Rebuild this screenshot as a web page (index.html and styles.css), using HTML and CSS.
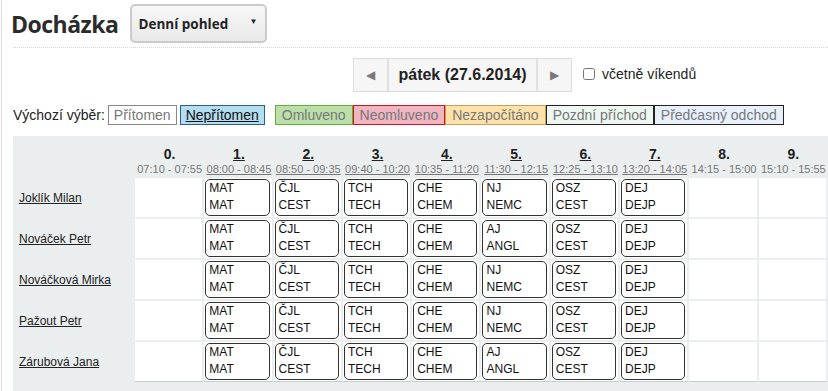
FILE: index.html
```html
<!DOCTYPE html>
<html lang="cs">
<head>
    <meta charset="UTF-8">
    <title>Docházka</title>
    <link rel="stylesheet" href="styles.css">
</head>
<body>
<div class="page">
    <div class="top">
        <h1>Docházka</h1>
        <div class="select-wrap">
            <select id="view">
                <option>Denní pohled</option>
                <option>Týdenní pohled</option>
            </select>
        </div>
    </div>

    <div class="datebar">
        <div class="datenav">
            <a class="nav-btn" href="#">&#9664;</a>
            <span class="nav-date">pátek (27.6.2014)</span>
            <a class="nav-btn" href="#">&#9654;</a>
        </div>
        <label class="weekend"><input type="checkbox"> včetně víkendů</label>
    </div>

    <div class="legend">
        <span class="legend-label">Výchozí výběr:</span>
        <span class="tag tag-present">Přítomen</span>
        <span class="tag tag-absent"><a href="#">Nepřítomen</a></span>
        <span class="group">
            <span class="tag tag-excused">Omluveno</span><span class="tag tag-unexcused">Neomluveno</span><span class="tag tag-uncounted">Nezapočítáno</span><span class="tag tag-late">Pozdní příchod</span><span class="tag tag-early">Předčasný odchod</span>
        </span>
    </div>

    <div class="board">
        <table class="grid">
            <thead>
                <tr>
                    <th class="name-col"></th>
                    <th><span class="num">0.</span><span class="time">07:10 - 07:55</span></th>
                    <th><a href="#" class="num">1.</a><a href="#" class="time">08:00 - 08:45</a></th>
                    <th><a href="#" class="num">2.</a><a href="#" class="time">08:50 - 09:35</a></th>
                    <th><a href="#" class="num">3.</a><a href="#" class="time">09:40 - 10:20</a></th>
                    <th><a href="#" class="num">4.</a><a href="#" class="time">10:35 - 11:20</a></th>
                    <th><a href="#" class="num">5.</a><a href="#" class="time">11:30 - 12:15</a></th>
                    <th><a href="#" class="num">6.</a><a href="#" class="time">12:25 - 13:10</a></th>
                    <th><a href="#" class="num">7.</a><a href="#" class="time">13:20 - 14:05</a></th>
                    <th><span class="num">8.</span><span class="time">14:15 - 15:00</span></th>
                    <th><span class="num">9.</span><span class="time">15:10 - 15:55</span></th>
                </tr>
            </thead>
            <tbody>
                <tr>
                    <td class="name"><a href="#">Joklík Milan</a></td>
                    <td></td>
                    <td><div class="lesson">MAT<br>MAT</div></td>
                    <td><div class="lesson">ČJL<br>CEST</div></td>
                    <td><div class="lesson">TCH<br>TECH</div></td>
                    <td><div class="lesson">CHE<br>CHEM</div></td>
                    <td><div class="lesson">NJ<br>NEMC</div></td>
                    <td><div class="lesson">OSZ<br>CEST</div></td>
                    <td><div class="lesson">DEJ<br>DEJP</div></td>
                    <td></td>
                    <td></td>
                </tr>
                <tr>
                    <td class="name"><a href="#">Nováček Petr</a></td>
                    <td></td>
                    <td><div class="lesson">MAT<br>MAT</div></td>
                    <td><div class="lesson">ČJL<br>CEST</div></td>
                    <td><div class="lesson">TCH<br>TECH</div></td>
                    <td><div class="lesson">CHE<br>CHEM</div></td>
                    <td><div class="lesson">AJ<br>ANGL</div></td>
                    <td><div class="lesson">OSZ<br>CEST</div></td>
                    <td><div class="lesson">DEJ<br>DEJP</div></td>
                    <td></td>
                    <td></td>
                </tr>
                <tr>
                    <td class="name"><a href="#">Nováčková Mirka</a></td>
                    <td></td>
                    <td><div class="lesson">MAT<br>MAT</div></td>
                    <td><div class="lesson">ČJL<br>CEST</div></td>
                    <td><div class="lesson">TCH<br>TECH</div></td>
                    <td><div class="lesson">CHE<br>CHEM</div></td>
                    <td><div class="lesson">NJ<br>NEMC</div></td>
                    <td><div class="lesson">OSZ<br>CEST</div></td>
                    <td><div class="lesson">DEJ<br>DEJP</div></td>
                    <td></td>
                    <td></td>
                </tr>
                <tr>
                    <td class="name"><a href="#">Pažout Petr</a></td>
                    <td></td>
                    <td><div class="lesson">MAT<br>MAT</div></td>
                    <td><div class="lesson">ČJL<br>CEST</div></td>
                    <td><div class="lesson">TCH<br>TECH</div></td>
                    <td><div class="lesson">CHE<br>CHEM</div></td>
                    <td><div class="lesson">NJ<br>NEMC</div></td>
                    <td><div class="lesson">OSZ<br>CEST</div></td>
                    <td><div class="lesson">DEJ<br>DEJP</div></td>
                    <td></td>
                    <td></td>
                </tr>
                <tr>
                    <td class="name"><a href="#">Zárubová Jana</a></td>
                    <td></td>
                    <td><div class="lesson">MAT<br>MAT</div></td>
                    <td><div class="lesson">ČJL<br>CEST</div></td>
                    <td><div class="lesson">TCH<br>TECH</div></td>
                    <td><div class="lesson">CHE<br>CHEM</div></td>
                    <td><div class="lesson">AJ<br>ANGL</div></td>
                    <td><div class="lesson">OSZ<br>CEST</div></td>
                    <td><div class="lesson">DEJ<br>DEJP</div></td>
                    <td></td>
                    <td></td>
                </tr>
            </tbody>
        </table>
    </div>
</div>
</body>
</html>
```

FILE: styles.css
```css
body {
    margin: 0;
    font-family: "Liberation Sans", Arial, sans-serif;
    color: #222;
    background: #fff;
    overflow: hidden;
}
a {
    color: #222;
}
.page {
    margin-left: 1px;
    border-left: 1px solid #dedede;
    padding-left: 11px;
    min-height: 391px;
}
.top {
    display: flex;
    align-items: center;
    height: 47px;
    border-bottom: 1px dotted #d4d4d4;
}
h1 {
    margin: 0 0 0 -2px;
    font-family: "Open Sans", sans-serif;
    font-size: 23px;
    font-weight: 700;
    color: #2b2b2b;
    letter-spacing: -0.5px;
}
.select-wrap {
    position: relative;
    margin-left: 12px;
}
.select-wrap::after {
    content: "\25BC";
    position: absolute;
    right: 10px;
    top: 13px;
    font-size: 8px;
    color: #222;
    pointer-events: none;
}
select {
    appearance: none;
    -webkit-appearance: none;
    width: 137px;
    height: 39px;
    padding: 0 0 0 6px;
    border: 2px solid #cbcbcb;
    border-radius: 5px;
    background: linear-gradient(#f7f7f7, #e9e9e9);
    font-family: "Open Sans", sans-serif;
    font-size: 13.5px;
    font-weight: 700;
    color: #222;
}
.datebar {
    display: flex;
    align-items: center;
    margin: 10px 0 0 340px;
}
.datenav {
    display: flex;
    height: 32px;
    border: 1px solid #dcdcdc;
    background: #f6f6f6;
}
.nav-btn {
    width: 33px;
    display: flex;
    align-items: center;
    justify-content: center;
    font-size: 12px;
    color: #7a7a7a;
    text-decoration: none;
}
.nav-date {
    width: 147px;
    display: flex;
    align-items: center;
    justify-content: center;
    border-left: 2px solid #e0e0e0;
    border-right: 2px solid #e0e0e0;
    font-size: 16px;
    font-weight: 700;
    color: #222;
}
.weekend {
    display: flex;
    align-items: center;
    margin: -3px 0 0 9px;
    font-size: 14px;
    color: #222;
}
.weekend input {
    margin: 0 7px 0 2px;
    width: 12px;
    height: 12px;
}
.legend {
    display: flex;
    align-items: center;
    margin-top: 13px;
    font-size: 14px;
}
.legend-label {
    margin-right: 3px;
}
.tag {
    display: inline-block;
    padding: 0 5px;
    line-height: 18px;
    border: 1px solid #888;
    color: #777;
    background: #fff;
}
.tag-absent {
    margin-left: 3px;
    background: #b3ddf0;
    border-color: #2e5f8c;
}
.tag-absent a {
    color: #111;
}
.group {
    display: flex;
    margin-left: 10px;
}
.group .tag {
    padding: 0 6px;
}
.tag-excused {
    background: #bcdfaa;
    border-color: #5fb135;
}
.tag-unexcused {
    background: #f0b5c0;
    border-color: #d2121f;
}
.tag-uncounted {
    background: #fde3a9;
    border-color: #c9a055;
}
.tag-late {
    background: #edf6f0;
    border-color: #222;
}
.tag-early {
    background: #e8f0fc;
    border-color: #222;
}
.board {
    margin-top: 11px;
    background: #ebeeee;
    height: 260px;
}
.grid {
    width: 100%;
    border-collapse: separate;
    border-spacing: 0;
    table-layout: fixed;
}
.grid th {
    height: 40px;
    padding: 0 0 2px;
    vertical-align: bottom;
    text-align: center;
    font-weight: 400;
}
.grid th.name-col {
    width: 122px;
}
.num {
    display: block;
    font-size: 14px;
    font-weight: 700;
    line-height: 16px;
    color: #222;
}
.time {
    display: block;
    font-size: 11px;
    line-height: 14px;
    color: #777;
    white-space: nowrap;
}
.grid td {
    padding: 1px 2px 1px 1px;
    background: #fff;
    border-right: 2px solid #ebeeee;
    border-bottom: 2px solid #ebeeee;
    vertical-align: middle;
}
.grid td.name {
    padding-left: 6px;
    background: transparent;
    border-right: none;
    border-bottom-color: transparent;
    font-size: 12px;
}
.grid tbody tr:last-child td {
    border-bottom: 1px solid #c9cccc;
}
.grid tbody tr:last-child td.name {
    border-bottom-color: transparent;
}
.lesson {
    height: 35px;
    padding: 0 3px;
    border: 1px solid #333;
    border-radius: 5px;
    font-size: 12px;
    line-height: 17px;
    color: #111;
    background: #fff;
}
```
